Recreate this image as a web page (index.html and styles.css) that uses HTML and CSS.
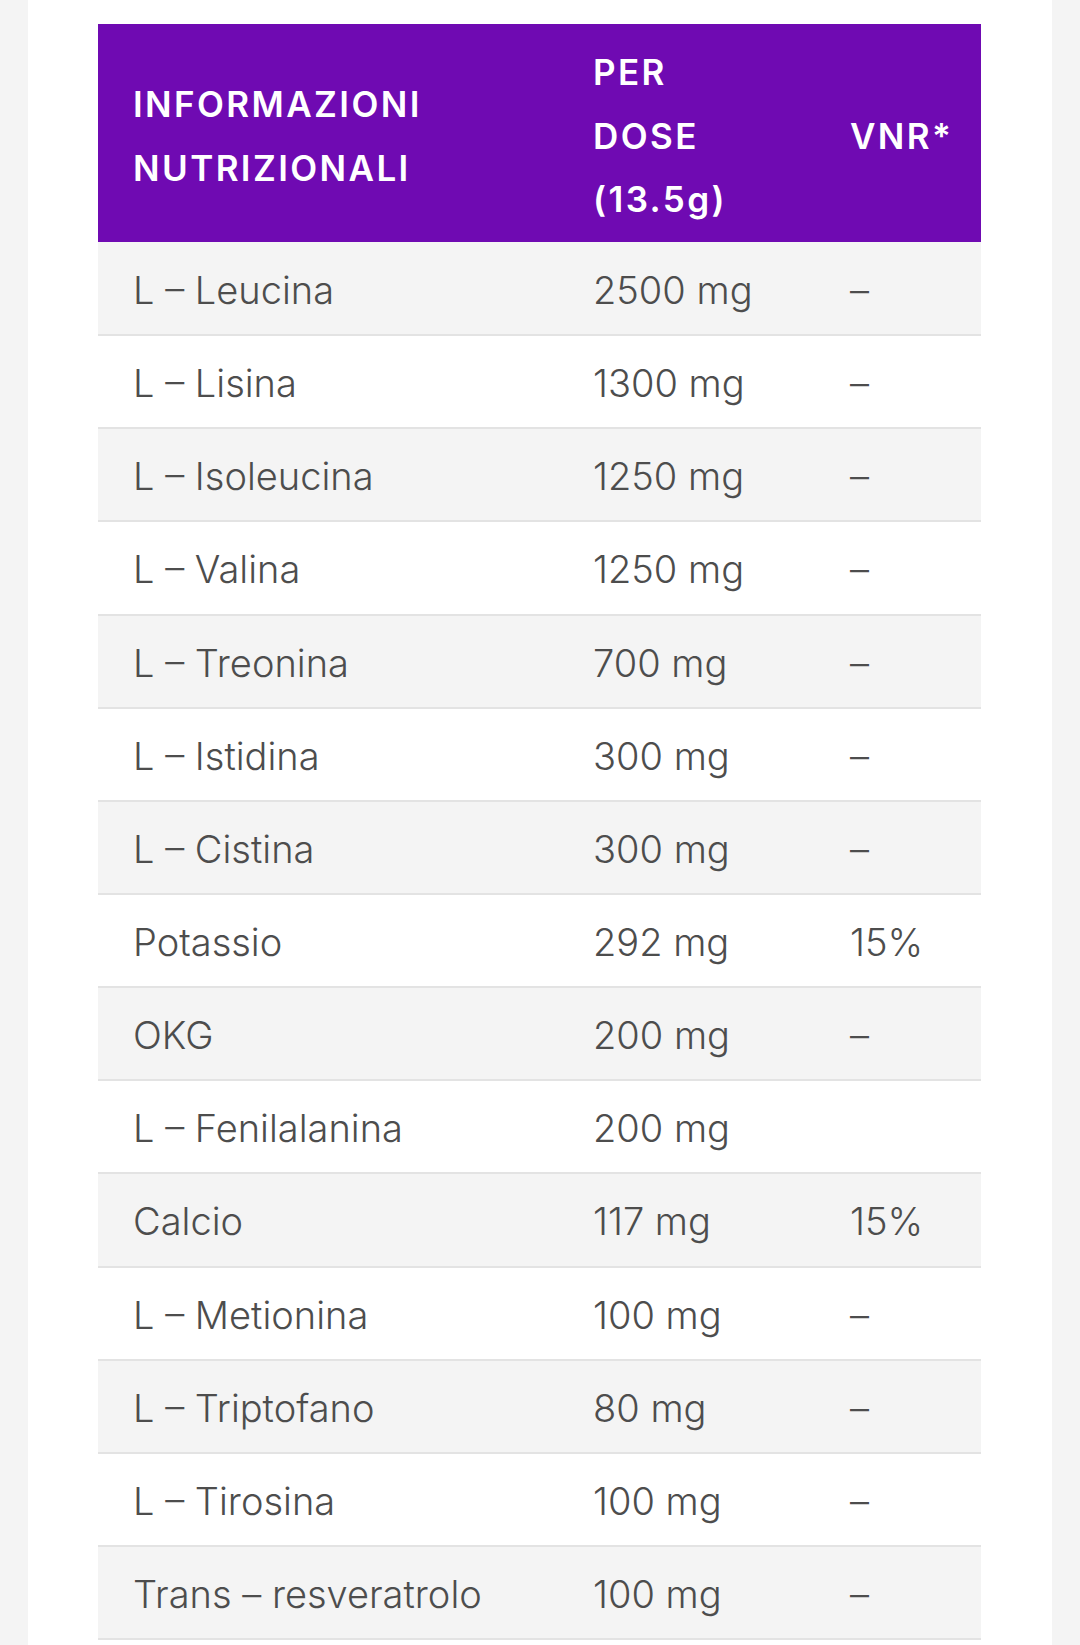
FILE: index.html
```html
<!DOCTYPE html>
<html lang="it">
<head>
<meta charset="utf-8">
<title>Informazioni nutrizionali</title>
<link rel="stylesheet" href="styles.css">
</head>
<body>
<div class="card">
  <table class="nutri">
    <thead>
      <tr>
        <th class="c1">INFORMAZIONI<br>NUTRIZIONALI</th>
        <th class="c2">PER<br>DOSE<br>(13.5g)</th>
        <th class="c3">VNR*</th>
      </tr>
    </thead>
    <tbody>
      <tr><td>L – Leucina</td><td>2500 mg</td><td>–</td></tr>
      <tr><td>L – Lisina</td><td>1300 mg</td><td>–</td></tr>
      <tr><td>L – Isoleucina</td><td>1250 mg</td><td>–</td></tr>
      <tr><td>L – Valina</td><td>1250 mg</td><td>–</td></tr>
      <tr><td>L – Treonina</td><td>700 mg</td><td>–</td></tr>
      <tr><td>L – Istidina</td><td>300 mg</td><td>–</td></tr>
      <tr><td>L – Cistina</td><td>300 mg</td><td>–</td></tr>
      <tr><td>Potassio</td><td>292 mg</td><td>15%</td></tr>
      <tr><td>OKG</td><td>200 mg</td><td>–</td></tr>
      <tr><td>L – Fenilalanina</td><td>200 mg</td><td></td></tr>
      <tr><td>Calcio</td><td>117 mg</td><td>15%</td></tr>
      <tr><td>L – Metionina</td><td>100 mg</td><td>–</td></tr>
      <tr><td>L – Triptofano</td><td>80 mg</td><td>–</td></tr>
      <tr><td>L – Tirosina</td><td>100 mg</td><td>–</td></tr>
      <tr><td>Trans – resveratrolo</td><td>100 mg</td><td>–</td></tr>
    </tbody>
  </table>
</div>
</body>
</html>
```
FILE: styles.css
```css
html, body {
  margin: 0;
  padding: 0;
  background: #f4f4f4;
}
body {
  font-family: Inter, "Noto Sans", "Liberation Sans", sans-serif;
  color: #4d4d4d;
}
.card {
  background: #ffffff;
  margin: 0 28px;
  padding: 24px 71px 20px 70px;
  min-height: 1645px;
  box-sizing: border-box;
}
.nutri {
  width: 883px;
  border-collapse: collapse;
  table-layout: fixed;
}
.nutri th {
  background: #6f0ab2;
  color: #ffffff;
  font-weight: 600;
  font-size: 35px;
  letter-spacing: 2.4px;
  line-height: 63.5px;
  text-align: left;
  vertical-align: middle;
  padding: 17px 0 10px 35px;
  height: 191px;
  white-space: nowrap;
}
.nutri .c1 { width: 425px; }
.nutri .c2 { width: 222px; }
.nutri .c3 { width: 131px; }
.nutri td {
  font-size: 38px;
  font-weight: 300;
  height: 93.15px;
  padding: 3px 0 0 35px;
  box-sizing: border-box;
  vertical-align: middle;
  border-bottom: 2px solid #e3e3e3;
  white-space: nowrap;
}
.nutri tbody tr:nth-child(odd) td {
  background: #f4f4f4;
}
.nutri tbody tr:nth-child(even) td {
  background: #ffffff;
}
```
